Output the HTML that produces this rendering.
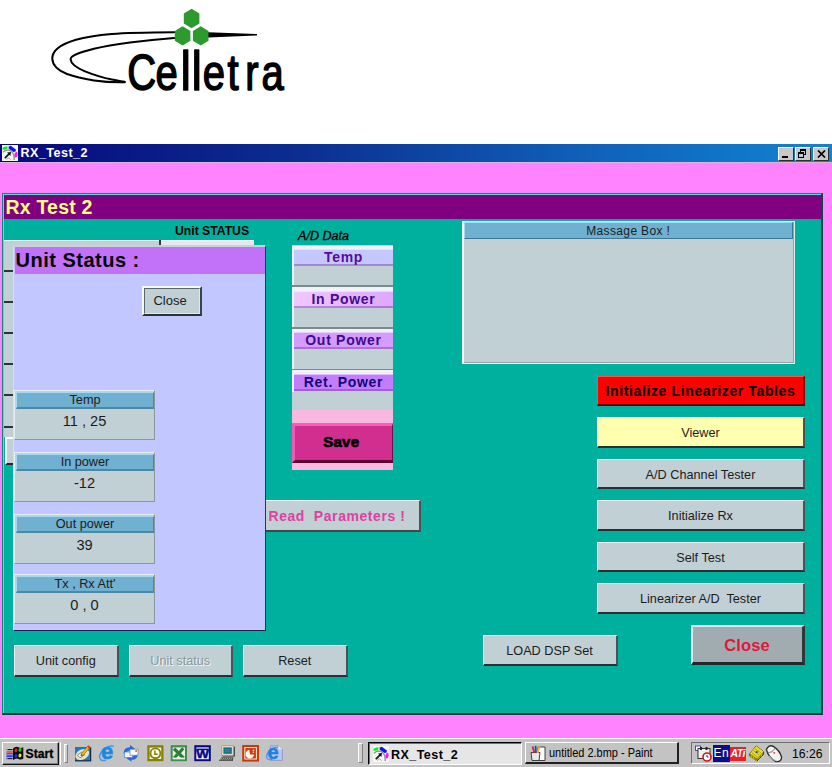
<!DOCTYPE html>
<html><head><meta charset="utf-8"><title>RX_Test_2</title>
<style>
html,body{margin:0;padding:0;}
body{width:832px;height:767px;overflow:hidden;background:#fff;position:relative;font-family:"Liberation Sans",sans-serif;color:#1c1c1c;}
.a{position:absolute;box-sizing:border-box;}
.t{position:absolute;white-space:nowrap;line-height:1;}
.btn{position:absolute;box-sizing:border-box;background:#c1d0d5;border-top:1px solid #fff;border-left:1px solid #fff;border-right:2px solid #4a5456;border-bottom:2px solid #2a3032;text-align:center;font-size:12.7px;white-space:nowrap;}
.fld{position:absolute;box-sizing:border-box;background:#c1d0d5;border-top:1.5px solid #e8eef0;border-left:1.5px solid #e8eef0;border-right:1.5px solid #8a989c;border-bottom:1.5px solid #8a989c;width:141px;height:50px;left:14px;}
.fld .h{position:absolute;left:1px;right:0px;top:1px;height:17px;box-sizing:border-box;background:#70b0d0;border-top:1px solid #a8d8f0;border-left:1px solid #a8d8f0;border-bottom:2px solid #4a88a8;border-right:1px solid #4a88a8;text-align:center;font-size:12.7px;line-height:14px;}
.fld .v{position:absolute;left:0;right:0;top:22px;text-align:center;font-size:14.6px;line-height:17px;}
.adh{position:absolute;left:294px;width:99px;height:17px;box-sizing:border-box;text-align:center;font-weight:bold;font-size:14px;letter-spacing:.72px;line-height:15px;border-bottom:2px solid rgba(120,60,160,.45);border-top:1px solid rgba(255,255,255,.5);}
.adb{position:absolute;left:292px;width:101px;background:#c1d0d5;}
</style></head><body>

<!-- LOGO -->
<svg class="a" style="left:0;top:0" width="832" height="140" viewBox="0 0 832 140">
  <g fill="none" stroke="#000" stroke-linecap="round" stroke-width="2">
    <path d="M174.3,32.3 C150,32.5 125,33 112,34 C95,35.5 84,37.5 76,39.8 C60,44.5 52,51 52.3,58.8 C52.6,65.5 58,70.5 67,74 C76,77.3 85,79 94,80.4 C105,82 115,82.4 124.7,82.2"/>
    <path d="M174.3,38 C160,39 145,40.5 130,42.5 C116,44.3 104,46.3 94,48.8 C80,52.3 70.4,55.5 70.6,59.3 C70.8,63.5 77,68 85,71.4 C94,75 103,77.8 112,79.5 C117,80.5 121,81.3 124.7,81.8"/>
  </g>
  <path d="M208 32.3 L257 34 L257 35.4 L208 37.6 Z" fill="#000"/>
  <g fill="#2c9a2c">
    <polygon points="191.6,8.8 199.4,13.6 199.4,23.4 191.6,28.2 183.8,23.4 183.8,13.6"/>
    <polygon points="182.6,26.2 190.4,31 190.4,40.8 182.6,45.6 174.8,40.8 174.8,31"/>
    <polygon points="200.7,26.2 208.5,31 208.5,40.8 200.7,45.6 192.9,40.8 192.9,31"/>
  </g>
  <text transform="scale(0.8,1)" y="90" font-family="Liberation Sans, sans-serif" font-size="50" fill="#000" stroke="#000" stroke-width="1.5" stroke-linejoin="round" x="159 194.5">Ce<tspan font-size="56" stroke-width="1.7" x="225.8 239.8">ll</tspan><tspan x="253.5 284.5 306.5 327">etra</tspan></text>
</svg>

<!-- TITLE BAR -->
<div class="a" style="left:0;top:144px;width:832px;height:18px;background:linear-gradient(90deg,#08087c 0%,#0c2c90 35%,#1060b8 70%,#1084d0 100%);"></div>
<div class="a" style="left:0;top:162px;width:832px;height:1px;background:#d8b8d8;"></div>
<svg class="a" style="left:2.4px;top:145px" width="16" height="16" viewBox="0 0 16 16">
  <rect width="16" height="16" fill="#f6f6f6"/>
  <path d="M.6 2.4 L5.4 1 L5.4 4.2 L.6 5 Z" fill="#10f010"/>
  <path d="M6.6 1.4 L8.8 .8 L13.9 4.6 L13.6 6.6 L11.6 7 L6.7 3.7 Z" fill="#1010f4"/>
  <ellipse cx="14" cy="9.6" rx="1.5" ry="2.9" transform="rotate(12 14 9.6)" fill="#f418f4"/>
  <path d="M.8 7.2 Q5 3.4 9.6 6.4 Q12.6 9 12.2 15" stroke="#8c8c8c" stroke-width="1.3" fill="none"/>
  <path d="M4.6 14.6 Q6 11 8.6 14.8" stroke="#a0a0a0" stroke-width="1" fill="none"/>
  <path d="M2.8 13.2 L7.4 8.6" stroke="#141414" stroke-width="1.7" fill="none"/>
  <path d="M5 7.6 L9 7 L8.4 11 Z" fill="#141414"/>
</svg>
<div class="t" style="left:20.5px;top:146px;color:#fff;font-weight:bold;font-size:12.6px;letter-spacing:.45px;line-height:14px;">RX_Test_2</div>
<!-- caption buttons -->
<div class="a cb" style="left:778px;top:146.5px;width:16px;height:14px;background:#c8c8c8;border-top:1px solid #fff;border-left:1px solid #fff;border-right:1px solid #303030;border-bottom:1px solid #303030;"><div class="a" style="left:3px;top:8px;width:6px;height:2px;background:#000"></div></div>
<div class="a cb" style="left:794.5px;top:146.5px;width:16px;height:14px;background:#c8c8c8;border-top:1px solid #fff;border-left:1px solid #fff;border-right:1px solid #303030;border-bottom:1px solid #303030;">
  <div class="a" style="left:4px;top:1px;width:6px;height:6px;border:1px solid #000;border-top-width:2px;"></div>
  <div class="a" style="left:2px;top:4px;width:6px;height:6px;border:1px solid #000;border-top-width:2px;background:#c8c8c8"></div>
</div>
<div class="a cb" style="left:813px;top:146.5px;width:16px;height:14px;background:#c8c8c8;border-top:1px solid #fff;border-left:1px solid #fff;border-right:1px solid #303030;border-bottom:1px solid #303030;">
  <svg class="a" style="left:3px;top:2px" width="9" height="8" viewBox="0 0 9 8"><path d="M1 0.5 L8 7.5 M8 0.5 L1 7.5" stroke="#000" stroke-width="1.7"/></svg>
</div>

<!-- PINK CLIENT -->
<div class="a" style="left:0;top:163px;width:832px;height:575px;background:#ff82ff;"></div>

<!-- MAIN PANEL -->
<div class="a" style="left:2px;top:193px;width:820.5px;height:522px;background:#00b09e;border-top:1px solid #10867c;border-left:1px solid #10867c;border-right:2px solid #0a4a44;border-bottom:2px solid #0a3a36;"></div>
<div class="a" style="left:3px;top:194px;width:818px;height:1px;background:#40e8d8;"></div>
<div class="a" style="left:3px;top:194px;width:1px;height:519px;background:#40e8d8;"></div>
<div class="a" style="left:4px;top:195px;width:816.5px;height:23.5px;background:#800080;"></div>
<div class="t" style="left:5.5px;top:197px;color:#ffff80;font-weight:bold;font-size:19.5px;line-height:20px;letter-spacing:.2px;">Rx Test 2</div>

<div class="t" style="left:175px;top:224px;color:#000;font-weight:bold;font-size:12.2px;line-height:14px;letter-spacing:0px;">Unit STATUS</div>
<div class="t" style="left:298px;top:229px;color:#000;font-style:italic;font-size:12.6px;line-height:14px;-webkit-text-stroke:.3px #000;">A/D Data</div>

<!-- hidden table bits behind status panel -->
<div class="a" style="left:4px;top:240px;width:156px;height:8px;background:#c1d0d5;border-top:1px solid #e8f0f0;"></div>
<div class="a" style="left:159px;top:240px;width:1.5px;height:6px;background:#303838;"></div>
<div class="a" style="left:160.5px;top:240px;width:93px;height:6px;background:#e4eaec;border-top:1px solid #fff;"></div>
<div class="a" style="left:4px;top:246px;width:9px;height:191px;background:#c1d0d5;"></div>
<div class="a" style="left:4px;top:270px;width:9px;height:2px;background:#2c3434;"></div>
<div class="a" style="left:4px;top:301px;width:9px;height:2px;background:#2c3434;"></div>
<div class="a" style="left:4px;top:332px;width:9px;height:2px;background:#2c3434;"></div>
<div class="a" style="left:4px;top:363px;width:9px;height:2px;background:#2c3434;"></div>
<div class="a" style="left:4px;top:394px;width:9px;height:2px;background:#2c3434;"></div>
<div class="a" style="left:4px;top:425.5px;width:9px;height:2px;background:#2c3434;"></div>
<div class="a" style="left:5px;top:436.5px;width:8px;height:28.5px;background:#c1d0d5;border-top:2px solid #fff;border-left:2px solid #fff;border-bottom:2px solid #202828;"></div>

<!-- UNIT STATUS PANEL -->
<div class="a" style="left:13px;top:245px;width:253px;height:386px;background:#c2c8ff;border-top:2px solid #c8d0d8;border-left:1.5px solid #d8dcf8;border-right:1.5px solid #30305c;border-bottom:1.5px solid #20204c;"></div>
<div class="a" style="left:14.5px;top:247px;width:250px;height:26.5px;background:#c272f8;"></div>
<div class="t" style="left:15.5px;top:249px;color:#000;font-weight:bold;font-size:20px;line-height:22px;letter-spacing:.5px;">Unit Status :</div>
<div class="btn" style="left:142px;top:286px;width:60px;height:30px;border:2px solid;border-color:#f4f8f8 #3a4446 #2a3234 #f4f8f8;font-size:13px;line-height:25px;padding-right:4px;"><div class="a" style="left:0;top:0;right:0;bottom:0;border:1.5px solid;border-color:#5a6668 #e0e8ea #e0e8ea #5a6668;"></div>Close</div>

<div class="fld" style="top:389.5px"><div class="h">Temp</div><div class="v">11 , 25</div></div>
<div class="fld" style="top:451.5px"><div class="h">In power</div><div class="v">-12</div></div>
<div class="fld" style="top:514px"><div class="h">Out power</div><div class="v">39</div></div>
<div class="fld" style="top:573.5px"><div class="h">Tx , Rx  Att'</div><div class="v">0 , 0</div></div>

<!-- A/D DATA COLUMN -->
<div class="a" style="left:291.5px;top:245px;width:101.5px;height:165px;background:#c1d0d5;"></div>
<div class="a" style="left:291.5px;top:245px;width:101.5px;height:1px;background:#f0b8d8;"></div>
<div class="a" style="left:291.5px;top:246px;width:101.5px;height:3px;background:#f0f2f8;"></div>
<div class="a" style="left:291.5px;top:246px;width:2px;height:146px;background:#f0f2f8;"></div>
<div class="adh" style="top:249px;background:#c4c8ff;color:#5808a0;">Temp</div>
<div class="a" style="left:291.5px;top:285px;width:101.5px;height:1.5px;background:#7c8a8e;"></div>
<div class="a" style="left:291.5px;top:286.5px;width:101.5px;height:4px;background:#f0f2f8;"></div>
<div class="adh" style="top:290.5px;background:linear-gradient(90deg,#f0c8ff,#dca8ff);color:#480898;">In Power</div>
<div class="a" style="left:291.5px;top:327px;width:101.5px;height:1.5px;background:#7c8a8e;"></div>
<div class="a" style="left:291.5px;top:328.5px;width:101.5px;height:3.5px;background:#f0f2f8;"></div>
<div class="adh" style="top:332px;background:#d49cff;color:#400890;">Out Power</div>
<div class="a" style="left:291.5px;top:368.5px;width:101.5px;height:1.5px;background:#7c8a8e;"></div>
<div class="a" style="left:291.5px;top:370px;width:101.5px;height:3.5px;background:#f0f2f8;"></div>
<div class="adh" style="top:373.5px;background:#c47cff;color:#10087c;">Ret. Power</div>
<div class="a" style="left:291.5px;top:410px;width:101.5px;height:60px;background:#f8b8e0;"></div>
<div class="a" style="left:291.5px;top:423px;width:101.5px;height:40px;background:#d02f8f;border-top:3px solid #fa5cba;border-left:3px solid #f458b4;border-right:1.5px solid #701048;border-bottom:3px solid #5c0030;text-align:center;font-weight:bold;color:#000;font-size:15px;line-height:32px;-webkit-text-stroke:.7px #000;letter-spacing:.3px;padding-right:4px;">Save</div>

<div class="btn" style="left:266px;top:500px;width:155px;height:31.5px;border-left:0;font-weight:bold;color:#e040a0;font-size:14px;letter-spacing:.56px;line-height:31px;text-align:left;padding-left:2.5px;white-space:pre;border-bottom-color:#404848;">Read  Parameters !</div>

<!-- MESSAGE BOX -->
<div class="a" style="left:462px;top:220.5px;width:332.5px;height:143px;background:#c1d0d5;border-top:1.5px solid #f4f8f8;border-left:2px solid #f4f8f8;border-right:1.5px solid #e4eaec;border-bottom:1.5px solid #f4f8f8;box-shadow:inset -1px -1px 0 #98a4a8;"></div>
<div class="a" style="left:464px;top:222px;width:328.5px;height:17px;background:#70b0d0;border-top:1px solid #a8d8f0;border-left:1px solid #a8d8f0;border-bottom:1.5px solid #3a7898;border-right:1.5px solid #3a7898;text-align:center;font-size:12px;letter-spacing:.36px;line-height:16px;">Massage Box !</div>

<!-- RIGHT BUTTONS -->
<div class="btn" style="left:597px;top:376px;width:208px;height:30px;background:#ff0000;border-color:#ff5050 #800000 #600000 #ff5050;border-width:1px 2px 2px 1px;font-weight:bold;color:#000;font-size:14px;letter-spacing:.62px;line-height:28px;">Initialize Linearizer Tables</div>
<div class="btn" style="left:597px;top:417px;width:208px;height:30.5px;background:#ffffb0;line-height:30px;">Viewer</div>
<div class="btn" style="left:597px;top:458.5px;width:208px;height:30.5px;line-height:30px;">A/D Channel Tester</div>
<div class="btn" style="left:597px;top:500px;width:208px;height:30.5px;line-height:30px;">Initialize Rx</div>
<div class="btn" style="left:597px;top:541.5px;width:208px;height:30.5px;line-height:30px;">Self Test</div>
<div class="btn" style="left:597px;top:583px;width:208px;height:30.5px;line-height:30px;white-space:pre;">Linearizer A/D  Tester</div>

<!-- BOTTOM BUTTONS -->
<div class="btn" style="left:14px;top:645px;width:104.5px;height:32px;line-height:30.5px;">Unit config</div>
<div class="btn" style="left:128.5px;top:645px;width:104.5px;height:32px;line-height:30.5px;color:#8a989c;text-shadow:1px 1px 0 #f4f8f8;">Unit status</div>
<div class="btn" style="left:243px;top:645px;width:104.5px;height:32px;line-height:30.5px;">Reset</div>
<div class="btn" style="left:482.5px;top:635px;width:135px;height:30.5px;line-height:30px;">LOAD DSP Set</div>
<div class="btn" style="left:691px;top:625px;width:114px;height:39.5px;background:#a0acb0;border-width:2px 3px 3px 2px;border-color:#e0e8ea #303838 #202828 #e0e8ea;font-weight:bold;color:#e01838;font-size:16.5px;line-height:36px;letter-spacing:.1px;padding-right:1px;">Close</div>

<!-- TASKBAR -->
<div class="a" style="left:0;top:738px;width:832px;height:29px;background:#c3c3c3;border-top:1.5px solid #fbfbfb;"></div>
<div class="a" style="left:2px;top:742px;width:56.5px;height:23px;background:#c3c3c3;border-top:1px solid #fff;border-left:1px solid #fff;border-right:1.5px solid #101010;border-bottom:1.5px solid #101010;box-shadow:inset -1px -1px 0 #808080;"></div>
<svg class="a" style="left:5.5px;top:746px" width="18" height="15" viewBox="0 0 18 15">
  <path d="M7 2.4 Q10 -0.2 13 1.6 Q15 2.6 17.3 1.2 L17.3 12.8 Q15 14.2 13 13.2 Q10 11.6 7 14.2 Z" fill="#0c0c0c"/>
  <ellipse cx="9.9" cy="4.4" rx="1.5" ry="1.9" fill="#f01818" transform="rotate(20 9.9 4.4)"/>
  <ellipse cx="14" cy="3.9" rx="1.5" ry="1.9" fill="#18d018" transform="rotate(20 14 3.9)"/>
  <ellipse cx="9.9" cy="9.9" rx="1.5" ry="1.9" fill="#1828f0" transform="rotate(20 9.9 9.9)"/>
  <ellipse cx="14" cy="9.5" rx="1.5" ry="1.9" fill="#f0e818" transform="rotate(20 14 9.5)"/>
  <rect x="2" y="3" width="4.5" height="1.2" fill="#202020"/><rect x=".5" y="3" width="1.2" height="1.2" fill="#e02020"/>
  <rect x=".5" y="5.4" width="6.3" height="1.1" fill="#f02020"/><rect x=".5" y="6.9" width="6.3" height="1.1" fill="#f02020"/>
  <rect x=".5" y="8.6" width="6.3" height="1.1" fill="#2030f0"/><rect x=".5" y="10.1" width="6.3" height="1.1" fill="#2030f0"/>
  <rect x="2" y="12" width="4.5" height="1.2" fill="#202020"/><rect x=".5" y="12" width="1.2" height="1.2" fill="#2030f0"/>
</svg>
<div class="t" style="left:25.5px;top:746.5px;color:#000;font-weight:bold;font-size:12.2px;line-height:14px;-webkit-text-stroke:.3px #000;">Start</div>
<div class="a" style="left:59.5px;top:742px;width:1px;height:23px;background:#888;border-right:1px solid #fff;"></div>
<div class="a" style="left:63.5px;top:743.5px;width:4px;height:19px;background:#cfcfcf;border-left:1px solid #fff;border-top:1px solid #fff;border-right:1px solid #808080;border-bottom:1px solid #808080;"></div>
<!-- quick launch icons -->
<svg class="a" style="left:74px;top:744px" width="19" height="19" viewBox="0 0 19 19">
  <rect x="1" y="3.4" width="16.2" height="14" fill="#101828"/>
  <rect x="1" y="3.4" width="15.2" height="13" fill="#2078c8"/>
  <ellipse cx="8.3" cy="10.5" rx="7.2" ry="5" transform="rotate(-28 8.3 10.5)" fill="#ebe4b8"/>
  <path d="M3.5 11 L7.5 8.3 L10.5 10.8 L6 13.8 Z" fill="#fff" stroke="#505050" stroke-width=".7"/>
  <path d="M7 10.2 L13.2 2.6 L15.4 4.2 L8.8 11.6 Z" fill="#f0b820" stroke="#805000" stroke-width=".6"/>
  <path d="M13.2 2.6 L14.3 1.2 L16.5 2.8 L15.4 4.2 Z" fill="#e83838"/>
  <path d="M7 10.2 L6.6 12 L8.8 11.6 Z" fill="#303030"/>
</svg>
<svg class="a" style="left:98px;top:744px" width="19" height="19" viewBox="0 0 19 19">
  <path d="M15.2 2.2 C11 0.8 3 5.5 1.6 12.2 C1.2 15.2 3.5 17.5 7.5 16.2" fill="none" stroke="#3c9cf0" stroke-width="1.5" stroke-linecap="round"/>
  <text x="3.1" y="14.9" font-family="Liberation Sans, sans-serif" font-weight="bold" font-size="22" fill="#1c88e0" stroke="#1c88e0" stroke-width=".6">e</text>
</svg>
<svg class="a" style="left:122px;top:744px" width="19" height="19" viewBox="0 0 19 19">
  <path d="M1.5 9.5 Q2 3 8 3.2 L8 1 L13 4.8 L8 8.4 L8 6.4 Q5 6.2 4.6 9.5 Z" fill="#2868d8"/>
  <path d="M16 9 Q16 16 9.5 15.8 L9.5 17.8 L4.5 14.2 L9.5 10.6 L9.5 12.6 Q12.6 12.6 12.9 9 Z" fill="#2868d8"/>
  <rect x="2.5" y="8" width="8" height="5.4" fill="#f0f2fa" stroke="#6080c0" stroke-width=".7"/>
  <rect x="8" y="5.2" width="8" height="6" fill="#fafaff" stroke="#6080c0" stroke-width=".7"/>
  <rect x="13.3" y="6.2" width="1.6" height="1.8" fill="#e06020"/>
</svg>
<svg class="a" style="left:146.5px;top:745px" width="17" height="17" viewBox="0 0 17 17">
  <rect x=".3" y=".2" width="16.2" height="16" fill="#868200"/>
  <rect x="2.6" y="2.6" width="11.6" height="11.4" fill="#fbfbf0"/>
  <circle cx="8.4" cy="8.3" r="5.9" fill="#868200"/>
  <circle cx="8.4" cy="8.3" r="4" fill="#fbfbf0"/>
  <path d="M7.9 5.6 L7.9 9.2 L10.8 9.2" stroke="#868200" stroke-width="1.5" fill="none"/>
</svg>
<svg class="a" style="left:170px;top:745px" width="18" height="17" viewBox="0 0 18 17">
  <rect x=".7" y=".2" width="16.3" height="16" fill="#3f8f4c"/>
  <rect x="2.7" y="2.4" width="12.3" height="11.8" fill="#e6f0e6"/>
  <path d="M4 3.6 L13.6 13.2" stroke="#2e7c3c" stroke-width="3.4"/>
  <path d="M13.2 3.2 L9.6 7.4 M7.4 9.2 L4 13.2" stroke="#2e7c3c" stroke-width="3"/>
  <rect x="2.7" y="12.6" width="12.3" height="1.6" fill="#e6f0e6"/>
</svg>
<svg class="a" style="left:194px;top:745px" width="18" height="17" viewBox="0 0 18 17">
  <rect x=".3" y=".2" width="16.5" height="16" fill="#0a0a86"/>
  <rect x="2.3" y="2.4" width="12.5" height="11.8" fill="#f4f4ff"/>
  <rect x="2.3" y="3.6" width="12.5" height="1.6" fill="#0a0a86"/>
  <text x="2.2" y="13.4" font-family="Liberation Sans, sans-serif" font-weight="bold" font-size="11.5" fill="#0a0a86" stroke="#0a0a86" stroke-width=".5" textLength="12.6" lengthAdjust="spacingAndGlyphs">W</text>
</svg>
<svg class="a" style="left:218px;top:745px" width="19" height="17" viewBox="0 0 19 17">
  <path d="M3.6 .8 L15.6 .8 L16.8 2 L16.8 11.6 L4.8 11.6 L3.6 10.6 Z" fill="#303030"/>
  <rect x="3.6" y=".8" width="12" height="9.8" fill="#ddd8c8"/>
  <rect x="5.4" y="2.4" width="8.4" height="6.4" fill="#107878"/>
  <rect x="7" y="4" width="5" height="3" fill="#5060d8"/>
  <path d="M.8 16 L3.6 12.2 L15.4 12.2 L14.8 16 Z" fill="#484848"/>
  <path d="M3 13.4 L14.4 13.4 M2.2 14.8 L14 14.8" stroke="#c8c4b8" stroke-width=".8" stroke-dasharray="1.2 .8"/>
</svg>
<svg class="a" style="left:242px;top:745px" width="18" height="17" viewBox="0 0 18 17">
  <rect x=".2" y="0" width="16.8" height="16.6" fill="#c83c0c"/>
  <rect x="2.8" y="2.6" width="11.6" height="11.4" fill="none" stroke="#ffe8d8" stroke-width="1"/>
  <path d="M7.6 5 A4.2 4.2 0 1 0 12 9.6 L8.2 9.6 Q7.2 7.6 7.6 5 Z" fill="#fff8f0"/>
  <rect x="10.6" y="4.6" width="1.6" height="1.2" fill="#ffe8d8"/><rect x="10.6" y="6.6" width="1.6" height="1.2" fill="#ffe8d8"/>
</svg>
<svg class="a" style="left:265px;top:744px" width="19" height="19" viewBox="0 0 19 19">
  <path d="M5.4 1.8 L13.6 1.8 L17.4 5.2 L17.4 16.4 L5.4 16.4 Z" fill="#bcc4ee" stroke="#8890c8" stroke-width=".8"/>
  <path d="M13.6 1.8 L13.6 5.2 L17.4 5.2 Z" fill="#e8ecff"/>
  <path d="M12.6 3.6 C9 2.6 2.6 6.6 1.6 12 C1.2 14.6 3.4 16.4 6.8 15.4" fill="none" stroke="#3c9cf0" stroke-width="1.3" stroke-linecap="round"/>
  <text x="2.4" y="15.2" font-family="Liberation Sans, sans-serif" font-weight="bold" font-size="20" fill="#1c80e0" stroke="#1c80e0" stroke-width=".5">e</text>
</svg>

<!-- task buttons -->
<div class="a" style="left:358px;top:742.5px;width:5px;height:20.5px;background:#cfcfcf;border-left:1px solid #fff;border-top:1px solid #fff;border-right:1px solid #808080;border-bottom:1px solid #808080;"></div>
<div class="a" style="left:368px;top:742px;width:153.5px;height:23px;background:#e6e6e6;border-top:1px solid #000;border-left:1px solid #000;border-right:1px solid #fff;border-bottom:1px solid #fff;box-shadow:inset 1px 1px 0 #707070;"></div>
<svg class="a" style="left:372.5px;top:746px" width="16" height="16" viewBox="0 0 16 16">
  <rect width="16" height="16" fill="#f6f6f6"/>
  <path d="M.6 2.4 L5.4 1 L5.4 4.2 L.6 5 Z" fill="#10f010"/>
  <path d="M6.6 1.4 L8.8 .8 L13.9 4.6 L13.6 6.6 L11.6 7 L6.7 3.7 Z" fill="#1010f4"/>
  <ellipse cx="14" cy="9.6" rx="1.5" ry="2.9" transform="rotate(12 14 9.6)" fill="#f418f4"/>
  <path d="M.8 7.2 Q5 3.4 9.6 6.4 Q12.6 9 12.2 15" stroke="#8c8c8c" stroke-width="1.3" fill="none"/>
  <path d="M4.6 14.6 Q6 11 8.6 14.8" stroke="#a0a0a0" stroke-width="1" fill="none"/>
  <path d="M2.8 13.2 L7.4 8.6" stroke="#141414" stroke-width="1.7" fill="none"/>
  <path d="M5 7.6 L9 7 L8.4 11 Z" fill="#141414"/>
</svg>
<div class="t" style="left:391px;top:747.5px;color:#000;font-weight:bold;font-size:12.6px;letter-spacing:.4px;line-height:14px;">RX_Test_2</div>

<div class="a" style="left:524.5px;top:742px;width:154.5px;height:22px;background:#c3c3c3;border-top:1px solid #fff;border-left:1px solid #fff;border-right:2px solid #202020;border-bottom:2px solid #202020;"></div>
<svg class="a" style="left:529px;top:745px" width="17" height="17" viewBox="0 0 17 17">
  <path d="M9 2 L16 2 L16 15.5 L9 15.5 Z" fill="#fff" stroke="#303030" stroke-width=".9"/>
  <path d="M2 7.5 L11 7.5 L10 15.5 L3 15.5 Z" fill="#e8e8e8" stroke="#303030" stroke-width=".9"/>
  <path d="M3.5 1.5 L5.5 8" stroke="#e02020" stroke-width="1.8"/>
  <path d="M6.5 0.8 L7 8" stroke="#2040e0" stroke-width="1.8"/>
  <path d="M10.5 1.5 L8.5 8" stroke="#e8c010" stroke-width="1.8"/>
</svg>
<div class="t" style="left:548.5px;top:745.5px;color:#000;font-size:12.4px;line-height:14px;transform:scaleX(.885);transform-origin:0 0;">untitled 2.bmp - Paint</div>

<!-- tray -->
<div class="a" style="left:691px;top:742px;width:139px;height:22px;background:#c3c3c3;border-top:1px solid #707070;border-left:1px solid #707070;border-right:1px solid #fff;border-bottom:1px solid #fff;"></div>
<svg class="a" style="left:695px;top:745px" width="17" height="17" viewBox="0 0 17 17">
  <rect x="0.5" y="1" width="5" height="4.5" fill="#fff" stroke="#2030a0" stroke-width=".8"/>
  <rect x="3" y="3.5" width="12" height="10" fill="#f0f0f0" stroke="#202020" stroke-width=".9"/>
  <rect x="5" y="2" width="2" height="3" fill="#202020"/><rect x="10.5" y="2" width="2" height="3" fill="#202020"/>
  <circle cx="12" cy="12" r="4" fill="#fff" stroke="#e01010" stroke-width="1.6"/>
  <path d="M12 10 L12 12 L13.5 12" stroke="#2030c0" stroke-width="1" fill="none"/>
</svg>
<div class="a" style="left:713px;top:745px;width:16.5px;height:16.5px;background:#0c0c8c;color:#fff;font-size:12px;line-height:16.5px;text-align:center;letter-spacing:.3px;">En</div>
<div class="a" style="left:729.5px;top:747px;width:16.5px;height:13.5px;background:#e82028;color:#fff;font-weight:bold;font-style:italic;font-size:10.5px;line-height:13.5px;text-align:center;letter-spacing:-.5px;">ATi</div>
<svg class="a" style="left:749px;top:744.5px" width="16" height="17" viewBox="0 0 16 17">
  <path d="M.8 8.6 L7.2 1 L14.6 6.6 L14.6 9.4 L8 16 L.8 11.2 Z" fill="#8c8400" stroke="#3c3800" stroke-width=".9"/>
  <path d="M.8 8.6 L7.2 1 L14.6 6.6 L8 13.4 Z" fill="#e4dc28"/>
  <path d="M2.6 7.6 L8.6 12 M4.4 5.6 L10.4 10 M6 3.6 L12.2 8.2" stroke="#a09800" stroke-width=".8"/>
  <path d="M.8 11.2 L8 16 M2.4 10.2 L2.4 12.2 M4.6 11.6 L4.6 13.8 M10 11.6 L10 14 M12.4 9.2 L12.4 11.6" stroke="#d8d020" stroke-width=".7"/>
  <rect x="6.8" y="6.2" width="1.8" height="1.8" fill="#2030e0"/>
</svg>
<svg class="a" style="left:765px;top:744px" width="18" height="19" viewBox="0 0 18 19">
  <path d="M1.4 5.6 Q3.6 .2 8.4 2.4 Q14.6 6.4 16.6 13 Q16.4 18.4 11 17.6 Q3.4 13.4 1.4 5.6 Z" fill="#f2f2f2" stroke="#2a2a2a" stroke-width="1.3"/>
  <path d="M2.6 8.4 Q7 9.2 10.4 3.8" stroke="#707070" stroke-width=".9" fill="none"/>
  <path d="M6.4 8.6 L7.6 6.6" stroke="#909090" stroke-width=".8"/>
  <rect x="8.4" y="8" width="1.7" height="1.7" fill="#e04848"/>
  <path d="M4 12 Q8 16.6 12 17" stroke="#c0c0c0" stroke-width="1" fill="none"/>
</svg>
<div class="t" style="left:792px;top:746.5px;color:#000;font-size:12.2px;line-height:14px;">16:26</div>

</body></html>
